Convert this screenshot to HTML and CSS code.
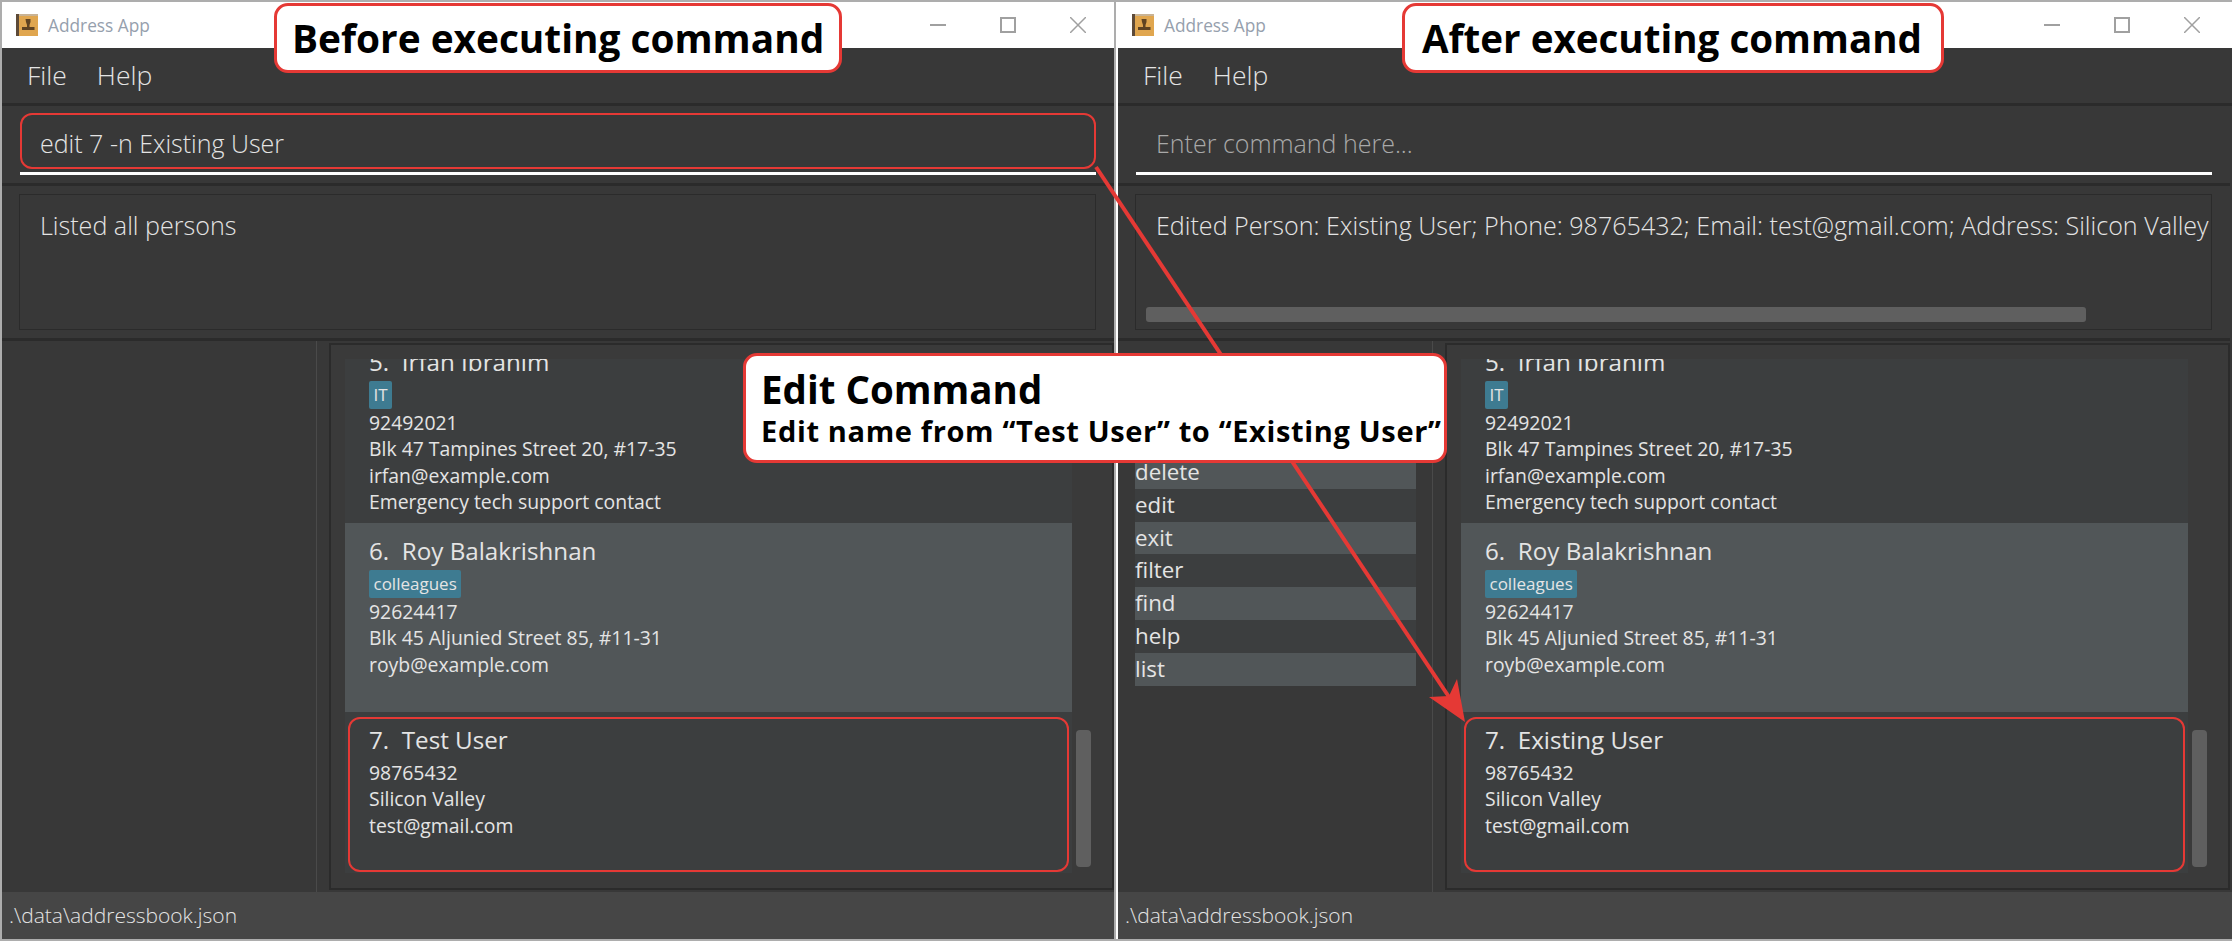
FILE: index.html
```html
<!DOCTYPE html>
<html lang="en">
  <head>
    <meta charset="UTF-8" />
    <title>Address App - Edit Command</title>
    <link rel="stylesheet" href="styles.css">
  </head>
  <body>
    <div class="page">
      <!-- Before -->
      <section class="window">
        <header class="title-bar">
          <svg class="app-icon" viewBox="0 0 22 22"><rect x="0" y="0" width="22" height="22" fill="#e0a64f"/><rect x="0" y="0" width="3" height="22" fill="#5d4a38"/><rect x="3" y="0" width="19" height="2" fill="#c9b394"/><path d="M9.5 5h5v3l-1 3v2h5v3H6v-3h5v-2l-1-3z" fill="#5f4322"/></svg>
          <span class="app-name">Address App</span>
          <span class="controls">
            <i class="ctl-min"></i>
            <i class="ctl-max"></i>
            <svg class="ctl-close" viewBox="0 0 16 16"><path d="M0 0l16 16M16 0L0 16" stroke="#a0a0a0" stroke-width="1.5"/></svg>
          </span>
        </header>
        <nav class="menu-bar"><span>File</span><span>Help</span></nav>
        <div class="content">
          <div class="command-row">
            <div class="command-field">edit 7 -n Existing User<span class="mark mark-field"></span></div>
          </div>
          <div class="result-row">
            <div class="result-box">Listed all persons</div>
          </div>
          <div class="main">
            <aside class="sidebar"></aside>
            <div class="panel">
              <div class="list">
                <article class="card">
                  <div class="name">5.  Irfan Ibrahim</div>
                  <div class="tags"><span class="tag">IT</span></div>
                  <div class="line">92492021</div>
                  <div class="line">Blk 47 Tampines Street 20, #17-35</div>
                  <div class="line">irfan@example.com</div>
                  <div class="line">Emergency tech support contact</div>
                </article>
                <article class="card card-even">
                  <div class="name">6.  Roy Balakrishnan</div>
                  <div class="tags"><span class="tag">colleagues</span></div>
                  <div class="line">92624417</div>
                  <div class="line">Blk 45 Aljunied Street 85, #11-31</div>
                  <div class="line">royb@example.com</div>
                </article>
                <article class="card">
                  <div class="name">7.  Test User</div>
                  <div class="tags"></div>
                  <div class="line">98765432</div>
                  <div class="line">Silicon Valley</div>
                  <div class="line">test@gmail.com</div>
                  <span class="mark mark-card"></span>
                </article>
              </div>
              <div class="scroll-thumb"></div>
            </div>
          </div>
        </div>
        <footer class="status-bar">.\data\addressbook.json</footer>
      </section>

      <!-- After -->
      <section class="window window-after">
        <header class="title-bar">
          <svg class="app-icon" viewBox="0 0 22 22"><rect x="0" y="0" width="22" height="22" fill="#e0a64f"/><rect x="0" y="0" width="3" height="22" fill="#5d4a38"/><rect x="3" y="0" width="19" height="2" fill="#c9b394"/><path d="M9.5 5h5v3l-1 3v2h5v3H6v-3h5v-2l-1-3z" fill="#5f4322"/></svg>
          <span class="app-name">Address App</span>
          <span class="controls">
            <i class="ctl-min"></i>
            <i class="ctl-max"></i>
            <svg class="ctl-close" viewBox="0 0 16 16"><path d="M0 0l16 16M16 0L0 16" stroke="#a0a0a0" stroke-width="1.5"/></svg>
          </span>
        </header>
        <nav class="menu-bar"><span>File</span><span>Help</span></nav>
        <div class="content">
          <div class="command-row">
            <div class="command-field placeholder">Enter command here...</div>
          </div>
          <div class="result-row">
            <div class="result-box">
              Edited Person: Existing User; Phone: 98765432; Email: test@gmail.com; Address: Silicon Valley
              <div class="h-thumb"></div>
            </div>
          </div>
          <div class="main">
            <aside class="sidebar">
              <ul class="commands">
                <li>delete</li>
                <li>edit</li>
                <li>exit</li>
                <li>filter</li>
                <li>find</li>
                <li>help</li>
                <li>list</li>
              </ul>
            </aside>
            <div class="panel">
              <div class="list">
                <article class="card">
                  <div class="name">5.  Irfan Ibrahim</div>
                  <div class="tags"><span class="tag">IT</span></div>
                  <div class="line">92492021</div>
                  <div class="line">Blk 47 Tampines Street 20, #17-35</div>
                  <div class="line">irfan@example.com</div>
                  <div class="line">Emergency tech support contact</div>
                </article>
                <article class="card card-even">
                  <div class="name">6.  Roy Balakrishnan</div>
                  <div class="tags"><span class="tag">colleagues</span></div>
                  <div class="line">92624417</div>
                  <div class="line">Blk 45 Aljunied Street 85, #11-31</div>
                  <div class="line">royb@example.com</div>
                </article>
                <article class="card">
                  <div class="name">7.  Existing User</div>
                  <div class="tags"></div>
                  <div class="line">98765432</div>
                  <div class="line">Silicon Valley</div>
                  <div class="line">test@gmail.com</div>
                  <span class="mark mark-card"></span>
                </article>
              </div>
              <div class="scroll-thumb"></div>
            </div>
          </div>
        </div>
        <footer class="status-bar">.\data\addressbook.json</footer>
      </section>

      <!-- Annotations on top of the two windows -->
      <svg class="arrow" viewBox="0 0 2232 941">
        <path d="M1096 167L1451 700" stroke="#e53935" stroke-width="4" fill="none"/>
        <path d="M1465 722L1429 697L1449 696L1457 679z" fill="#e53935"/>
      </svg>
      <div class="callout callout-before">Before executing command</div>
      <div class="callout callout-after">After executing command</div>
      <div class="callout callout-edit">
        <div class="callout-title">Edit Command</div>
        <div class="callout-sub">Edit name from “Test User” to “Existing User”</div>
      </div>
    </div>
  </body>
</html>
```

FILE: styles.css
```css
* {
  box-sizing: border-box;
}
body {
  margin: 0;
  background-color: #adadad;
  font-family: "Open Sans", "Noto Sans", sans-serif;
  overflow: hidden;
}
.page {
  position: relative;
  display: flex;
  width: 2232px;
  height: 941px;
  padding: 2px 0 2px 2px;
}
.window {
  display: flex;
  flex-direction: column;
  width: 1112px;
  background-color: #383838;
  color: #e4e4e4;
}
.window-after {
  width: 1116px;
  margin-left: 2px;
  border-left: 2px solid #fff;
}

/* title bar */
.title-bar {
  display: flex;
  flex: none;
  align-items: center;
  height: 46px;
  padding: 0 28px 0 14px;
  background-color: #fff;
}
.window-after .title-bar {
  padding-right: 32px;
}
.app-icon {
  width: 22px;
  height: 22px;
  margin-right: 10px;
}
.app-name {
  color: #96a0ad;
  font-size: 17.3px;
}
.controls {
  display: flex;
  align-items: center;
  gap: 54px;
  margin-left: auto;
}
.ctl-min {
  display: block;
  width: 16px;
  height: 2px;
  background-color: #a0a0a0;
}
.ctl-max {
  display: block;
  width: 16px;
  height: 16px;
  border: 2px solid #a0a0a0;
}
.ctl-close {
  width: 16px;
  height: 16px;
}

/* menu */
.menu-bar {
  display: flex;
  flex: none;
  gap: 30px;
  align-items: center;
  height: 58px;
  padding: 0 25px 2px;
  border-bottom: 3px solid #2b2b2b;
  font-size: 26.5px;
  font-weight: 300;
}

.content {
  display: flex;
  flex-direction: column;
  flex: 1;
  width: 1112px;
  min-height: 0;
}

/* command box */
.command-row {
  flex: none;
  height: 80px;
  padding: 7px 18px 0 18px;
  border-bottom: 3px solid #2b2b2b;
}
.command-field {
  position: relative;
  height: 62px;
  padding: 14px 20px 0;
  border-bottom: 3px solid #fff;
  font-size: 25px;
  line-height: 32px;
  font-weight: 300;
}
.placeholder {
  color: #a9a9a9;
}

/* result box */
.result-row {
  flex: none;
  height: 155px;
  padding: 8px 18px 8px 17px;
  border-bottom: 3px solid #2b2b2b;
}
.result-box {
  position: relative;
  height: 136px;
  padding: 14px 20px 0;
  border: 1px solid #2b2b2b;
  font-size: 25.1px;
  line-height: 32px;
  font-weight: 300;
  white-space: nowrap;
  overflow: hidden;
}
.h-thumb {
  position: absolute;
  left: 10px;
  bottom: 7px;
  width: 940px;
  height: 15px;
  background-color: #5f5f5f;
  border-radius: 3px;
}

/* main area */
.main {
  display: flex;
  flex: 1;
  min-height: 0;
}
.sidebar {
  width: 315px;
  padding: 115px 16px 0 17px;
  border-right: 1px solid #4a4a4a;
}
.commands {
  margin: 0;
  padding: 0;
  list-style: none;
  font-size: 22.3px;
  line-height: 32.8px;
}
.commands li {
  background-color: #3c3e3f;
}
.commands li:nth-child(odd) {
  background-color: #515658;
}
.panel {
  display: flex;
  flex: 1;
  margin: 2px 0 2px 12px;
  padding: 14px 17px 15px 14px;
  border: 2px solid #2b2b2b;
  background-color: #3a3a3a;
}
.list {
  display: flex;
  flex-direction: column;
  justify-content: flex-end;
  width: 727px;
  overflow: hidden;
}
.scroll-thumb {
  align-self: flex-end;
  flex: none;
  width: 15px;
  height: 137px;
  margin: 0 0 6px 4px;
  background-color: #5f5f5f;
  border-radius: 4px;
}

/* person cards */
.card {
  position: relative;
  display: flex;
  flex-direction: column;
  flex: none;
  height: 189px;
  padding: 14px 24px 0;
  background-color: #3c3e3f;
}
.card:last-child {
  height: 161px;
}
.card-even {
  background-color: #515658;
}
.name {
  height: 28px;
  font-size: 24.2px;
  line-height: 28px;
  white-space: pre;
}
.tags {
  display: flex;
  margin: 5px 0 1px;
}
.tag {
  height: 28px;
  padding: 0 4.5px;
  background-color: #3e7b91;
  border-radius: 2px;
  font-size: 17px;
  line-height: 27px;
}
.line {
  height: 26.4px;
  font-size: 19.4px;
  line-height: 26.4px;
  white-space: nowrap;
}

/* status bar */
.status-bar {
  flex: none;
  height: 47px;
  padding-left: 7px;
  background-color: #464646;
  font-size: 21px;
  font-weight: 300;
  line-height: 47px;
}

/* red annotation frames */
.mark {
  position: absolute;
  border: 2.5px solid #e53935;
  border-radius: 12px;
}
.mark-field {
  left: 0;
  right: 0;
  top: 0;
  height: 56px;
}
.mark-card {
  left: 3px;
  right: 3px;
  top: 5px;
  bottom: 1px;
}

/* arrow and callouts */
.arrow {
  position: absolute;
  left: 0;
  top: 0;
  width: 2232px;
  height: 941px;
}
.callout {
  position: absolute;
  display: flex;
  flex-direction: column;
  justify-content: center;
  align-items: flex-start;
  padding-left: 15px;
  background-color: #fff;
  border: 3px solid #e53935;
  border-radius: 14px;
  color: #000;
  font-weight: 700;
  white-space: nowrap;
}
.callout-before {
  left: 274px;
  top: 3px;
  width: 568px;
  height: 70px;
  font-size: 38.8px;
}
.callout-after {
  left: 1402px;
  top: 3px;
  width: 542px;
  height: 70px;
  padding-left: 17px;
  font-size: 38.6px;
}
.callout-edit {
  left: 743px;
  top: 353px;
  width: 704px;
  height: 110px;
  padding-top: 1px;
}
.callout-title {
  font-size: 38.5px;
  line-height: 44px;
}
.callout-sub {
  font-size: 29px;
  line-height: 40px;
  letter-spacing: 0.65px;
}
```
